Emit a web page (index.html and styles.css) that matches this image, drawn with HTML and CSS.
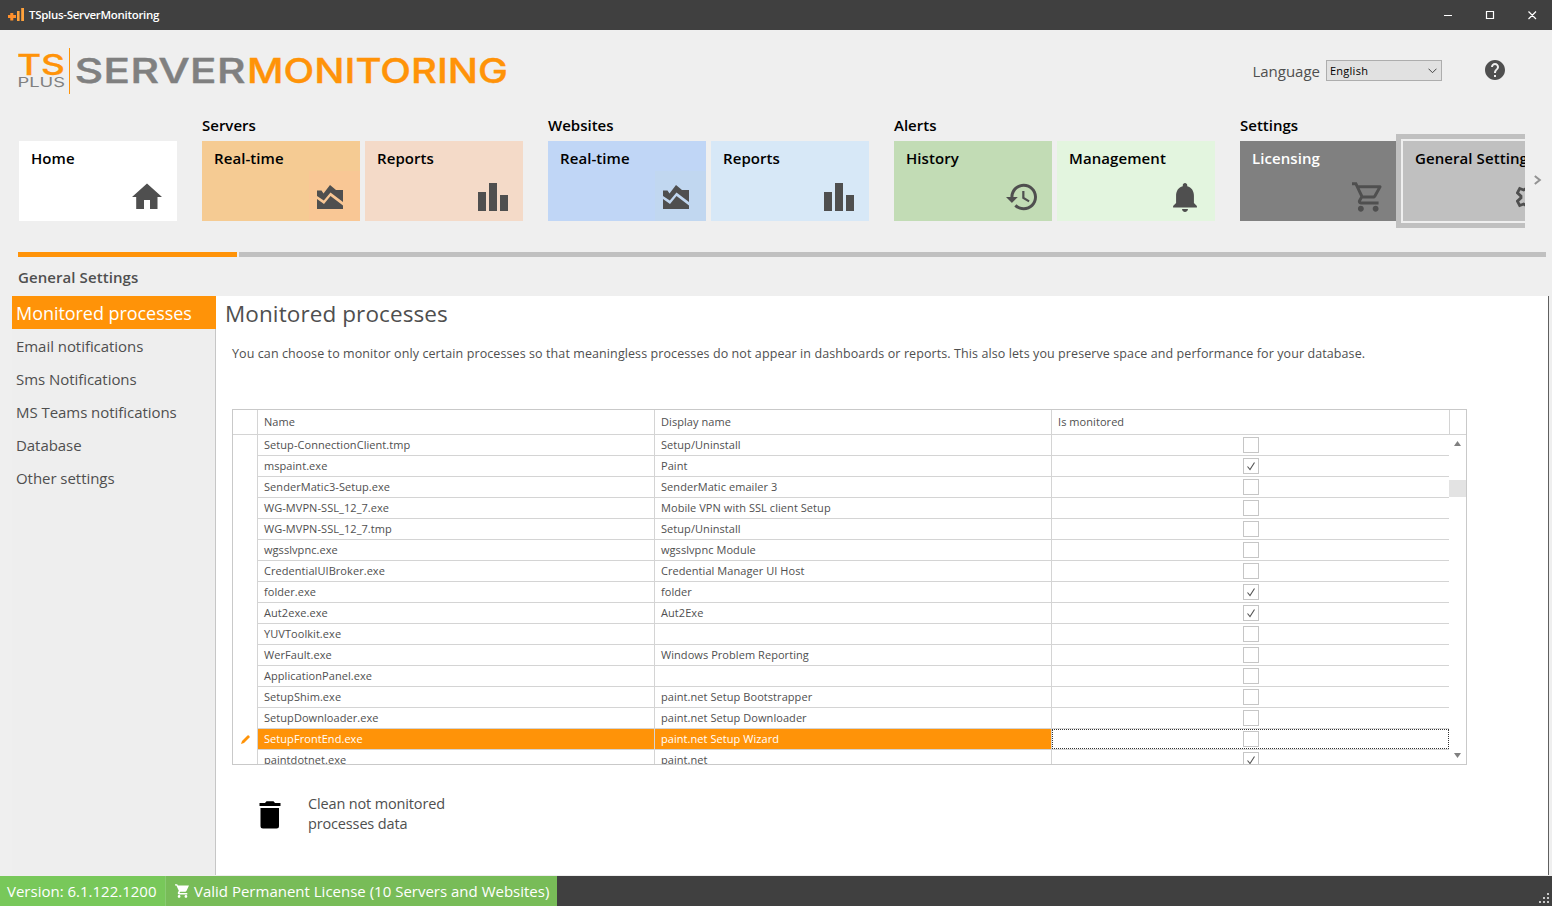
FILE: index.html
```html
<!DOCTYPE html>
<html lang="en">
<head>
  <meta charset="UTF-8">
  <meta name="viewport" content="width=device-width, initial-scale=1.0">
  <title>TSplus-ServerMonitoring</title>
  <link rel="stylesheet" href="styles.css">
</head>
<body>

  <svg class="symbols" width="0" height="0">
    <symbol id="area" viewBox="0 0 26 24">
      <path d="M0 5.500L4.500 5.500L6.500 8.500L13 0L19 5H26V17L13.500 7.500L6.800 15.500L0 11Z"/>
      <path d="M0 14L7 19L13.500 11L26 20.500V24H0Z"/>
    </symbol>
    <symbol id="bars" viewBox="0 0 30 28">
      <path d="M0 9h8v19H0zM11 0h8v28h-8zM22 12h8v16h-8z"/>
    </symbol>
  </svg>

  <div class="titlebar">
    <svg class="app-icon" width="16" height="14" viewBox="0 0 16 14">
      <path d="M0 8.500h8M3.800 5v7.500" stroke="#ff8f2b" stroke-width="3"/>
      <path d="M9 3h2.600v10H9zM13.200 0H16v13h-2.800z" fill="#ffa23c"/>
    </svg>
    <span class="app-name">TSplus-ServerMonitoring</span>
    <svg class="window-buttons" width="94" height="10" viewBox="0 0 94 10">
      <path d="M1 5.500h8M43.500 1.500h7v7h-7zM85.500 1.500l7.500 7.500M93 1.500L85.500 9" fill="none" stroke="#fff" stroke-width="1.200"/>
    </svg>
  </div>

  <header>
    <svg class="logo" width="490" height="48" viewBox="18 47 490 48">
      <text class="logo-ts" x="17" y="74.500" textLength="48" lengthAdjust="spacingAndGlyphs">TS</text>
      <text class="logo-plus" x="17.500" y="87" textLength="47.500" lengthAdjust="spacingAndGlyphs">PLUS</text>
      <path d="M69.500 48v46" stroke="#ff9308"/>
      <text class="logo-server" x="74.500" y="83" textLength="171" lengthAdjust="spacingAndGlyphs">SERVER</text>
      <text class="logo-monitoring" x="247" y="83" textLength="261" lengthAdjust="spacingAndGlyphs">MONITORING</text>
    </svg>
    <div class="language">
      <span class="language-label">Language</span>
      <div class="select"><span>English</span>
        <svg width="9" height="6" viewBox="0 0 9 6"><path d="M.5.7l4 4 4-4" fill="none" stroke="#444"/></svg>
      </div>
      <svg class="help" width="20" height="20" viewBox="2 2 20 20"><path fill="#4f4f4f" d="M12 2C6.480 2 2 6.480 2 12s4.480 10 10 10 10-4.480 10-10S17.520 2 12 2zm1 17h-2v-2h2v2zm2.070-7.750l-.9.920C13.450 12.900 13 13.500 13 15h-2v-.5c0-1.100.45-2.100 1.170-2.830l1.240-1.260c.37-.36.59-.86.59-1.410 0-1.100-.9-2-2-2s-2 .9-2 2H8c0-2.210 1.790-4 4-4s4 1.790 4 4c0 .88-.36 1.680-.93 2.250z"/></svg>
    </div>
  </header>

  <div class="nav-row">
    <nav>
      <div class="group">
        <h2></h2>
        <div class="tiles">
          <a class="tile home"><span>Home</span>
            <svg width="30" height="27" viewBox="0 -.5 30 27"><path d="M15 0L30 13.500H25.500V25.500H18V16.500H12V25.500H4.200V13.500H0Z"/></svg></a>
        </div>
      </div>
      <div class="group">
        <h2>Servers</h2>
        <div class="tiles">
          <a class="tile server-live"><span>Real-time</span><i class="shade"></i><svg class="area"><use href="#area"/></svg></a>
          <a class="tile server-reports"><span>Reports</span><svg class="bars"><use href="#bars"/></svg></a>
        </div>
      </div>
      <div class="group">
        <h2>Websites</h2>
        <div class="tiles">
          <a class="tile web-live"><span>Real-time</span><i class="shade"></i><svg class="area"><use href="#area"/></svg></a>
          <a class="tile web-reports"><span>Reports</span><svg class="bars"><use href="#bars"/></svg></a>
        </div>
      </div>
      <div class="group">
        <h2>Alerts</h2>
        <div class="tiles">
          <a class="tile history"><span>History</span>
            <svg width="31" height="28" viewBox="1 3 21 18"><path d="M13 3c-4.970 0-9 4.030-9 9H1l3.890 3.890.07.14L9 12H6c0-3.870 3.130-7 7-7s7 3.130 7 7-3.130 7-7 7c-1.930 0-3.680-.79-4.940-2.060l-1.420 1.420C8.270 19.990 10.510 21 13 21c4.970 0 9-4.030 9-9s-4.030-9-9-9zm-1 5v5l4.280 2.540.72-1.210-3.500-2.080V8H12z"/></svg></a>
          <a class="tile management"><span>Management</span>
            <svg width="24" height="29" viewBox="4 2.500 16 19.500"><path d="M12 22c1.100 0 2-.9 2-2h-4c0 1.100.89 2 2 2zm6-6v-5c0-3.070-1.640-5.640-4.500-6.320V4c0-.83-.67-1.500-1.500-1.500s-1.500.67-1.500 1.500v.68C7.630 5.360 6 7.920 6 11v5l-2 2v1h16v-1l-2-2z"/></svg></a>
        </div>
      </div>
      <div class="group">
        <h2>Settings</h2>
        <div class="tiles">
          <a class="tile licensing"><span>Licensing</span>
            <svg width="31" height="30" viewBox="1 2 21 20"><path d="M15.550 13c.75 0 1.410-.41 1.750-1.030l3.580-6.490c.37-.66-.11-1.480-.87-1.480H5.210l-.94-2H1v2h2l3.600 7.590-1.350 2.440C4.520 15.370 5.480 17 7 17h12v-2H7l1.100-2h7.450zM6.160 6h12.150l-2.760 5H8.530L6.160 6zM7 18c-1.100 0-1.990.9-1.990 2S5.900 22 7 22s2-.9 2-2-.9-2-2-2zm10 0c-1.100 0-1.990.9-1.990 2s.89 2 1.990 2 2-.9 2-2-.9-2-2-2z"/></svg></a>
          <a class="tile general selected"><span>General Settings</span>
            <svg width="28" height="28" viewBox="0 0 28 28"><path d="M11 1.500h6l.8 4 2.500 1.500 4-1.500 3 5-3 2.700v1.600l3 2.700-3 5-4-1.500-2.500 1.500-.8 4h-6l-.8-4L7.700 21l-4 1.500-2.300-4.300L5 14.800v-1.600L1.400 9.800l2.300-4.300 4 1.500 2.500-1.500z" fill="none" stroke="#4f4f4f" stroke-width="2.800"/></svg></a>
        </div>
      </div>
    </nav>
    <svg class="next" width="8" height="10" viewBox="0 0 8 10"><path d="M.8 1L5.800 5L.8 9" fill="none" stroke="#929292" stroke-width="2"/></svg>
  </div>

  <div class="scroll-track"><div class="scroll-thumb"></div><div class="scroll-rest"></div></div>
  <h1>General Settings</h1>

  <main>
    <aside>
      <a class="active">Monitored processes</a>
      <a>Email notifications</a>
      <a>Sms Notifications</a>
      <a>MS Teams notifications</a>
      <a>Database</a>
      <a>Other settings</a>
    </aside>
    <section>
      <h3>Monitored processes</h3>
      <p class="intro">You can choose to monitor only certain processes so that meaningless processes do not appear in dashboards or reports. This also lets you preserve space and performance for your database.</p>

      <div class="grid">
        <div class="grid-head">
          <div></div><div><span>Name</span></div><div><span>Display name</span></div><div><span>Is monitored</span></div>
        </div>
        <div class="grid-body">
          <div class="rows" id="rows"></div>
          <div class="scrollbar">
            <svg width="7" height="5"><path d="M3.500 0L7 5H0z"/></svg>
            <div class="thumb"></div>
            <svg class="down" width="7" height="5"><path d="M0 0H7L3.500 5z"/></svg>
          </div>
        </div>
      </div>

      <div class="clean">
        <svg width="22" height="28" viewBox="0 0 22 28"><path d="M1.500 7h18.500v18a2.500 2.500 0 01-2.500 2.500H4A2.500 2.500 0 011.500 25zM.5 2h5.500l1.500-1.700h7L16 2h5.500v3H.5z"/></svg>
        <span>Clean not monitored<br>processes data</span>
      </div>
    </section>
  </main>

  <footer>
    <div class="version"><span>Version: 6.1.122.1200</span></div>
    <div class="license">
      <svg width="14" height="14" viewBox="1 2 20.500 20"><path d="M7 18c-1.100 0-1.990.9-1.990 2S5.900 22 7 22s2-.9 2-2-.9-2-2-2zM1 2v2h2l3.600 7.590-1.350 2.450c-.16.28-.25.61-.25.960 0 1.100.9 2 2 2h12v-2H7.420l1.350-2h7.200c.75 0 1.410-.41 1.750-1.030L21.500 4H5.210l-.94-2H1zm16 16c-1.100 0-1.990.9-1.990 2s.89 2 1.990 2 2-.9 2-2-.9-2-2-2z"/></svg>
      <span>Valid Permanent License (10 Servers and Websites)</span>
    </div>
    <svg class="grip" width="10" height="10"><path d="M8 0h2v2H8zM4 4h2v2H4zM8 4h2v2H8zM0 8h2v2H0zM4 8h2v2H4zM8 8h2v2H8z"/></svg>
  </footer>

  <script>
    const processes = [
      ['Setup-ConnectionClient.tmp', 'Setup/Uninstall', false],
      ['mspaint.exe', 'Paint', true],
      ['SenderMatic3-Setup.exe', 'SenderMatic emailer 3', false],
      ['WG-MVPN-SSL_12_7.exe', 'Mobile VPN with SSL client Setup', false],
      ['WG-MVPN-SSL_12_7.tmp', 'Setup/Uninstall', false],
      ['wgsslvpnc.exe', 'wgsslvpnc Module', false],
      ['CredentialUIBroker.exe', 'Credential Manager UI Host', false],
      ['folder.exe', 'folder', true],
      ['Aut2exe.exe', 'Aut2Exe', true],
      ['YUVToolkit.exe', '', false],
      ['WerFault.exe', 'Windows Problem Reporting', false],
      ['ApplicationPanel.exe', '', false],
      ['SetupShim.exe', 'paint.net Setup Bootstrapper', false],
      ['SetupDownloader.exe', 'paint.net Setup Downloader', false],
      ['SetupFrontEnd.exe', 'paint.net Setup Wizard', false],
      ['paintdotnet.exe', 'paint.net', true]
    ];
    const editing = 'SetupFrontEnd.exe';
    const pencil = '<svg width="9" height="9"><path d="M0 9L1 6L6.500.5A1.500 1.500 0 018.500 2.500L3 8Z" fill="#ff9308"/></svg>';
    const tick = '<svg width="8" height="9"><path d="M.5 4.500L3 7.500L7.500.5" fill="none" stroke="#555" stroke-width="1.100"/></svg>';

    document.getElementById('rows').innerHTML = processes.map(([name, display, monitored]) => `
      <div class="row${name === editing ? ' editing' : ''}">
        <div class="mark">${name === editing ? pencil : ''}</div>
        <div><span>${name}</span></div>
        <div><span>${display}</span></div>
        <div class="check"><i class="box">${monitored ? tick : ''}</i></div>
      </div>`).join('');
  </script>

</body>
</html>
```
FILE: styles.css
```css
* {
  box-sizing: border-box;
}
body {
  margin: 0;
  width: 1552px;
  height: 906px;
  overflow: hidden;
  display: flex;
  flex-direction: column;
  background-color: #efefef;
  font-family: "Open Sans", "Noto Sans", sans-serif;
  color: #4f4f4f;
}
h1, h2, h3, p {
  margin: 0;
}
svg {
  display: block;
  flex: none;
}
.symbols {
  position: absolute;
}
.titlebar {
  flex: none;
  height: 30px;
  display: flex;
  align-items: center;
  padding: 0 15px 0 8px;
  background-color: #404040;
}
.app-name {
  margin-left: 5px;
  font-size: 11.5px;
  line-height: 16px;
  margin-bottom: 1px;
  font-weight: 600;
  letter-spacing: -0.3px;
  color: #fff;
}
.window-buttons {
  margin-left: auto;
}
header {
  flex: none;
  height: 84px;
  display: flex;
  justify-content: space-between;
  padding: 17px 47px 0 18px;
}
.logo text {
  font-family: Inter, sans-serif;
  font-weight: 500;
}
.logo .logo-ts {
  font-size: 29px;
  fill: #ff9308;
  stroke: #ff9308;
  stroke-width: 0.3px;
}
.logo .logo-plus {
  font-size: 13.5px;
  font-weight: 400;
  fill: #808080;
}
.logo .logo-server {
  font-size: 34px;
  fill: #808080;
  stroke: #808080;
  stroke-width: 0.4px;
}
.logo .logo-monitoring {
  font-size: 34px;
  fill: #ff9308;
  stroke: #ff9308;
  stroke-width: 0.4px;
}
.language {
  display: flex;
  align-items: flex-start;
  padding-top: 13px;
}
.language-label {
  font-size: 15px;
  line-height: 22px;
}
.select {
  width: 116px;
  height: 21px;
  margin-left: 6px;
  padding: 0 4px 0 3px;
  display: flex;
  align-items: center;
  justify-content: space-between;
  border: 1px solid #adadad;
  background-color: #e1e1e1;
  font-size: 11px;
  letter-spacing: 0.25px;
  color: #000;
}
.help {
  margin-left: 43px;
}
.nav-row {
  flex: none;
  display: flex;
  height: 138px;
}
nav {
  width: 1506px;
  margin-left: 19px;
  display: flex;
  gap: 25px;
  overflow: hidden;
}
.group h2 {
  height: 27px;
  font-size: 15px;
  line-height: 23px;
  font-weight: 600;
  color: #000;
}
.tiles {
  display: flex;
  gap: 5px;
}
.tile {
  position: relative;
  width: 158px;
  height: 80px;
  padding: 6px 12px;
  font-size: 15px;
  line-height: 23px;
  font-weight: 600;
  letter-spacing: 0.08px;
  color: #000;
  white-space: nowrap;
}
.tile svg {
  position: absolute;
  right: 15px;
  top: 42px;
  fill: #4f4f4f;
}
.tile .area {
  width: 26px;
  height: 24px;
  right: 17px;
  top: 44px;
}
.tile .bars {
  width: 30px;
  height: 28px;
}
.shade {
  position: absolute;
  right: 0;
  bottom: 0;
  width: 51px;
  height: 50px;
}
.home {
  background-color: #fff;
}
.server-live {
  background-color: #f5cb93;
}
.server-live .shade {
  background-color: #f9c795;
}
.server-reports {
  background-color: #f4dac8;
}
.web-live {
  background-color: #c0d6f6;
}
.web-live .shade {
  background-color: #c1d7f0;
}
.web-reports {
  background-color: #d7e8f7;
}
.history {
  background-color: #c2dcb5;
}
.management {
  background-color: #e3f5df;
}
.management svg {
  right: 18px;
}
.licensing {
  background-color: #808080;
  color: #fff;
}
.licensing svg {
  top: 41px;
}
.general {
  background-color: #c0c0c0;
}
.general svg {
  right: 17px;
}
.selected {
  box-shadow: 0 0 0 2px #efefef, 0 0 0 7px #c0c0c0;
}
.next {
  margin: 61px 0 0 9px;
}
.scroll-track {
  flex: none;
  height: 5px;
  display: flex;
  gap: 2px;
  margin: 0 6px 0 18px;
}
.scroll-thumb {
  width: 219px;
  background-color: #ff9308;
}
.scroll-rest {
  flex: 1;
  background-color: #c0c0c0;
}
h1 {
  flex: none;
  height: 39px;
  padding-left: 18px;
  font-size: 15px;
  line-height: 40px;
  font-weight: 600;
  letter-spacing: 0.08px;
}
main {
  flex: none;
  height: 579px;
  display: flex;
  margin: 0 3px 1px 12px;
}
aside {
  width: 204px;
  background-color: #eee;
  border-right: 1px solid #c6c6c6;
}
aside a {
  display: block;
  height: 33px;
  padding-left: 4px;
  font-size: 15px;
  line-height: 34px;
  letter-spacing: -0.05px;
}
aside .active {
  margin-right: -1px;
  font-size: 18px;
  background-color: #ff9308;
  color: #fff;
}
section {
  flex: 1;
  padding-left: 16px;
  background-color: #fff;
  border-right: 1px solid #606060;
}
h3 {
  height: 43px;
  margin-left: -7px;
  font-size: 22.5px;
  line-height: 36px;
  font-weight: 400;
  letter-spacing: 0.1px;
}
.intro {
  height: 70px;
  font-size: 12.5px;
  line-height: 29px;
  letter-spacing: 0.093px;
  white-space: nowrap;
}
.grid {
  width: 1235px;
  height: 356px;
  border: 1px solid #c9c9c9;
  font-size: 11px;
  letter-spacing: 0.06px;
}
.grid-head, .row {
  display: grid;
  grid-template-columns: 25px 397px 397px 398px;
}
.grid-head {
  height: 25px;
  line-height: 24px;
  border-bottom: 1px solid #d4d4d4;
}
.grid-head > div {
  padding-left: 6px;
  border-right: 1px solid #d4d4d4;
}
.grid-body {
  height: 329px;
  display: flex;
}
.rows {
  width: 1216px;
  overflow: hidden;
}
.row {
  height: 21px;
  line-height: 20px;
}
.row > div {
  padding-left: 6px;
  border-right: 1px solid #d4d4d4;
  border-bottom: 1px solid #d4d4d4;
}
.row .mark {
  padding: 6px 0 0 8px;
  border-bottom: 0;
}
.row .check {
  padding: 2px 0 0 191px;
}
.box {
  width: 16px;
  height: 16px;
  display: block;
  padding: 3px;
  border: 1px solid #c6c6c6;
}
.editing > div:nth-child(2), .editing > div:nth-child(3) {
  background-color: #ff9308;
  color: #fff;
}
.editing .check {
  position: relative;
}
.editing .check::before {
  content: "";
  position: absolute;
  inset: 0;
  border: 1px dotted #333;
}
.scrollbar {
  width: 17px;
  display: flex;
  flex-direction: column;
  align-items: center;
  padding: 6px 0;
  fill: #808080;
}
.scrollbar .thumb {
  width: 17px;
  height: 17px;
  margin-top: 34px;
  background-color: #e3e3e3;
}
.scrollbar .down {
  margin-top: auto;
}
.clean {
  display: flex;
  margin: 29px 0 0 27px;
  font-size: 14.5px;
  line-height: 20px;
  letter-spacing: -0.15px;
}
.clean svg {
  margin-top: 7px;
}
.clean span {
  margin-left: 27px;
}
footer {
  flex: none;
  height: 30px;
  display: flex;
  background-color: #404040;
  color: #fff;
  font-size: 15px;
  line-height: 30px;
  white-space: nowrap;
}
.version {
  width: 166px;
  padding-left: 7px;
  background-color: #78c85a;
  border-right: 1px solid #8acb72;
}
.license {
  width: 391px;
  display: flex;
  align-items: center;
  gap: 5px;
  padding-left: 9px;
  background-color: #78bc58;
}
.license svg {
  fill: #fff;
}
.grip {
  margin: 17px 3px 0 auto;
  fill: #c8c8c8;
}
```
